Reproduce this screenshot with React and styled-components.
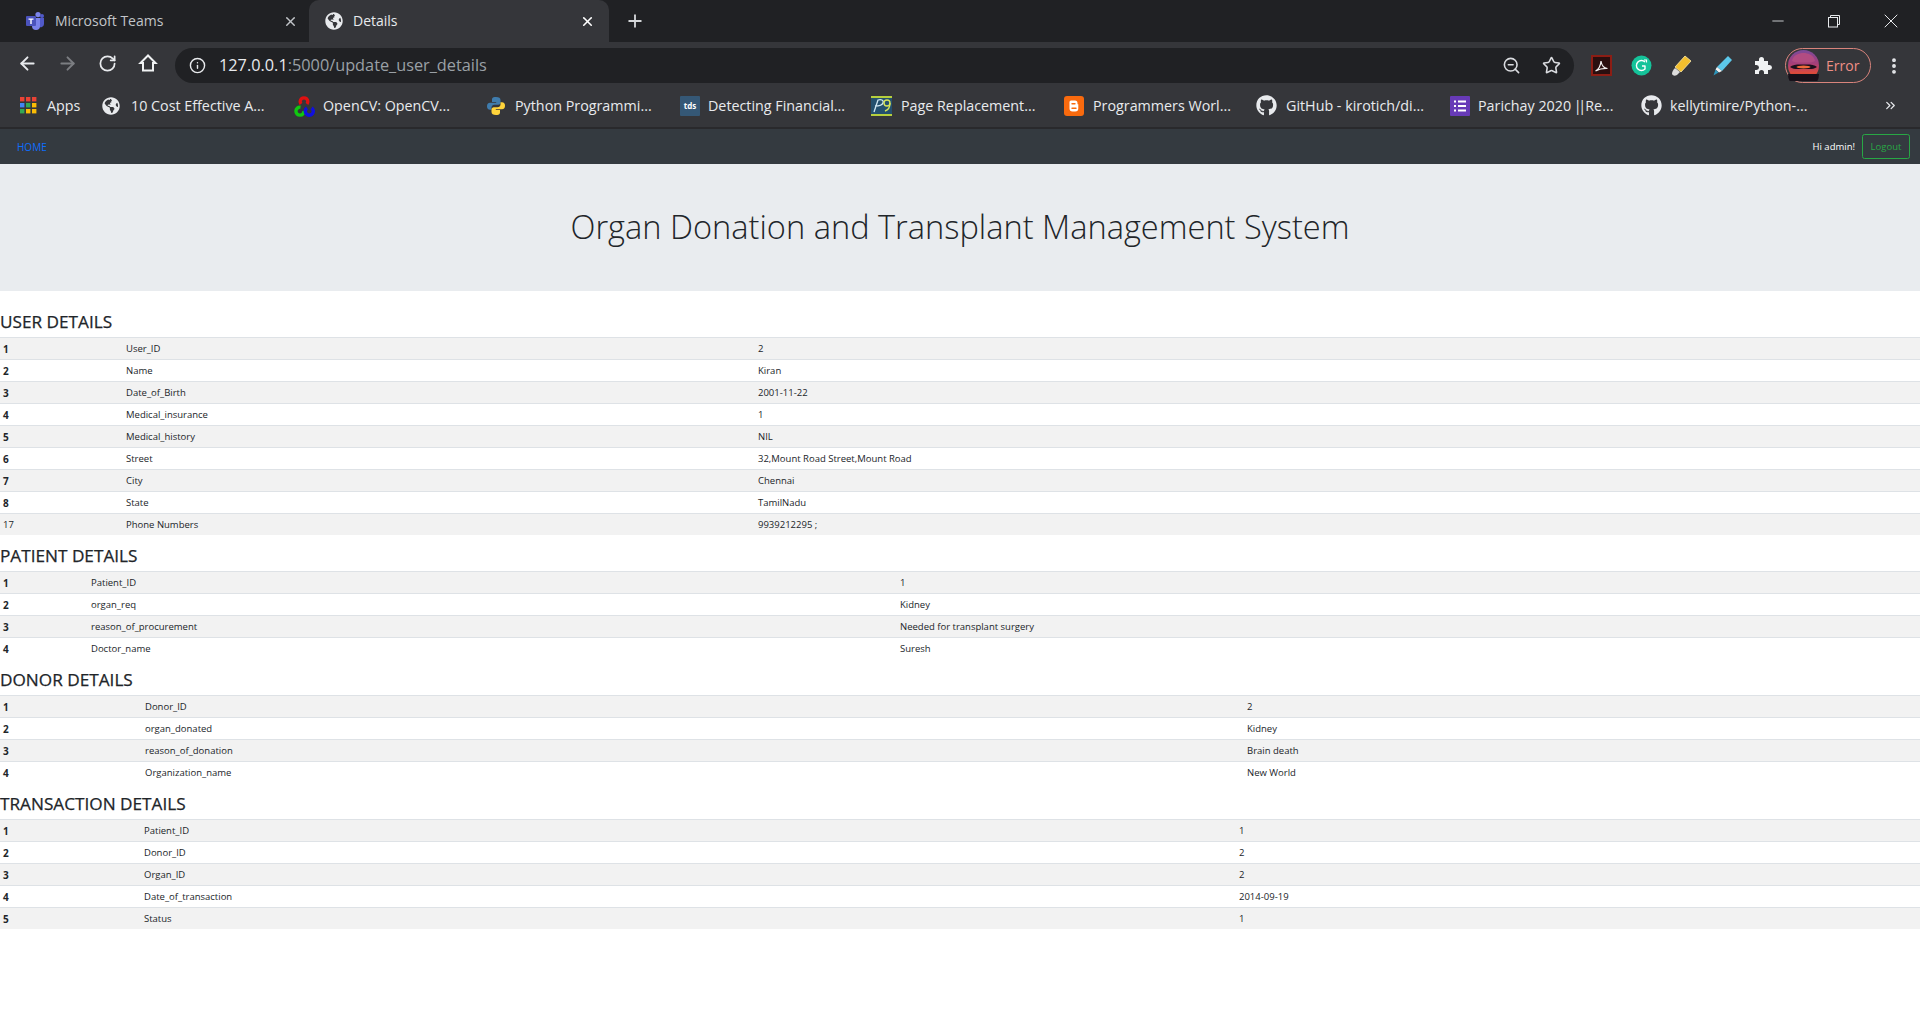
import React from 'react';
import styled, { createGlobalStyle } from 'styled-components';
import { ArrowLeft, ArrowRight, RotateCw, Info, ZoomOut, Star, Plus, X, Minus, MoreVertical, ChevronsRight } from 'lucide-react';
import { FaGithub, FaGlobeAmericas } from 'react-icons/fa';

const Global = createGlobalStyle`
  html, body { margin: 0; padding: 0; background: #fff; }
  body { font-family: "Open Sans", "Noto Sans", sans-serif; overflow: hidden; }
  * { box-sizing: border-box; }
`;
const Page = styled.div`width: 1920px; height: 1029px; display: flex; flex-direction: column; background: #fff;`;
const TabStrip = styled.div`height: 42px; background: #202124; display: flex; align-items: stretch; color: #fff;`;
const Tab = styled.div`
  width: ${p => p.$w}px; padding: 0 ${p => p.$pr}px 0 ${p => p.$pl}px; display: flex; align-items: center; gap: 10px;
  background: ${p => (p.$active ? '#35363a' : 'transparent')};
  color: ${p => (p.$active ? '#e8eaed' : '#c2c5c9')};
  border-radius: 10px 10px 0 0; font-size: 14px;
`;
const TabTitle = styled.span`flex: 1; white-space: nowrap; padding-bottom: 2px;`;
const NewTab = styled.div`width: 52px; display: flex; align-items: center; justify-content: center; color: #d5d7da;`;
const StripSpace = styled.div`flex: 1;`;
const WinButtons = styled.div`display: grid; grid-template-columns: repeat(3, 56.5px); justify-items: center; align-items: center; padding-right: 1px; color: #e8eaed;`;
const Toolbar = styled.div`height: 42px; background: #35363a; display: flex; align-items: center; padding-left: 7px; color: #e8eaed;`;
const NavIcons = styled.div`display: grid; grid-template-columns: repeat(4, 40.4px); justify-items: center; align-items: center; width: 168px;`;
const Omnibox = styled.div`width: 1399px; height: 35px; border-radius: 18px; background: #202124; display: flex; align-items: center; padding: 0 13px 0 14px; gap: 13px; margin-top: 5px;`;
const Url = styled.div`flex: 1; font-size: 16.3px; color: #9aa0a6; white-space: nowrap; padding-bottom: 2px;`;
const UrlHost = styled.span`color: #e8eaed;`;
const OmniIcons = styled.div`display: flex; align-items: center; gap: 21px; color: #dadce0;`;
const ExtIcons = styled.div`display: flex; align-items: center; gap: 19px; margin-left: 17px; margin-top: 5px;`;
const Profile = styled.div`width: 86px; height: 35px; margin-left: 13px; border: 1.5px solid #d9847c; border-radius: 18px; display: flex; align-items: center; gap: 7px; padding-left: 2px; color: #ee8f86; font-size: 14px; margin-top: 5px;`;
const Dots = styled.div`margin-left: 13px; margin-top: 5px; color: #e8eaed; display: flex;`;
const Bookmarks = styled.div`height: 45px; background: #35363a; display: flex; align-items: center; padding-left: 20px; color: #e8eaed; border-bottom: 2px solid #29292c;`;
const Mark = styled.div`width: ${p => p.$w}px; display: flex; align-items: center; font-size: 14.3px; white-space: nowrap;`;
const MarkIcon = styled.span`width: ${p => p.$w || 29}px; flex: none; display: flex; align-items: center;`;
const Tight = styled.span`letter-spacing: -3.5px; margin: 0 2.5px;`;
const Chevron = styled.div`margin-left: 52px; display: flex;`;
const NavBar = styled.nav`height: 35px; background: #343a40; display: flex; align-items: center; padding: 0 10px 0 17px; font-size: 9.5px;`;
const HomeLink = styled.a`color: #0d6efd; flex: 1; font-size: 10px;`;
const Hello = styled.span`color: #fff; margin-right: 7px;`;
const Logout = styled.span`height: 25px; width: 48px; border: 1px solid #28a745; border-radius: 2.5px; color: #28a745; display: flex; align-items: center; justify-content: center;`;
const Jumbotron = styled.header`height: 127px; background: #e9ecef; display: flex; align-items: center; justify-content: center; margin-bottom: 10px; padding-bottom: 2px;`;
const Title = styled.h1`margin: 0; font-size: 32.6px; font-weight: 300; color: #212529;`;
const Heading = styled.h5`margin: 0; height: 36px; padding-top: 10px; font-size: 17.2px; line-height: 22px; font-weight: 500; color: #212529; -webkit-text-stroke: 0.25px #212529;`;
const Table = styled.table`width: 100%; border-collapse: separate; border-spacing: 0; table-layout: fixed; font-size: 9.5px; color: #212529;`;
const Col = styled.col`width: ${p => p.$w}px;`;
const Row = styled.tr`height: 22px; background: ${p => (p.$odd ? '#f2f2f2' : '#fff')};`;
const Cell = styled.td`padding: 0 3px; height: 22px; line-height: 20px; border-top: 1px solid #dee2e6; font-weight: ${p => (p.$bold ? 700 : 400)}; font-size: ${p => (p.$bold ? '10px' : '9.5px')}; white-space: nowrap;`;

const sections = [
  { title: 'USER DETAILS', cols: [123, 632], rows: [['1','User_ID','2'],['2','Name','Kiran'],['3','Date_of_Birth','2001-11-22'],['4','Medical_insurance','1'],['5','Medical_history','NIL'],['6','Street','32,Mount Road Street,Mount Road'],['7','City','Chennai'],['8','State','TamilNadu'],['17','Phone Numbers','9939212295 ;']], plainLast: true },
  { title: 'PATIENT DETAILS', cols: [88, 809], rows: [['1','Patient_ID','1'],['2','organ_req','Kidney'],['3','reason_of_procurement','Needed for transplant surgery'],['4','Doctor_name','Suresh']] },
  { title: 'DONOR DETAILS', cols: [142, 1102], rows: [['1','Donor_ID','2'],['2','organ_donated','Kidney'],['3','reason_of_donation','Brain death'],['4','Organization_name','New World']] },
  { title: 'TRANSACTION DETAILS', cols: [141, 1095], rows: [['1','Patient_ID','1'],['2','Donor_ID','2'],['3','Organ_ID','2'],['4','Date_of_transaction','2014-09-19'],['5','Status','1']] },
];

const TeamsLogo = () => (
  <svg width="20" height="20" viewBox="0 0 20 20"><circle cx="13" cy="3.6" r="2.6" fill="#7b83eb"/><circle cx="17" cy="5" r="2" fill="#5059c9"/><path d="M11 7h8v6a3.5 3.5 0 0 1-5 3z" fill="#5059c9"/><path d="M7 7h8v8a4 4 0 0 1-8 0z" fill="#7b83eb"/><rect x="1" y="5" width="10" height="10" rx="1" fill="#4b53bc"/><path d="M3.5 7.5h5v1.2H6.7v4.3H5.3V8.7H3.5z" fill="#fff"/></svg>
);
const HomeIcon = () => (
  <svg width="20" height="20" viewBox="0 0 20 20" fill="none" stroke="#f1f3f4" strokeWidth="2" strokeLinejoin="miter"><path d="M10 2.500L2.500 10H5v7.500h10V10h2.500z"/></svg>
);
const AppsGrid = () => (
  <svg width="17" height="17" viewBox="0 0 17 17">
    {['#ea4335','#ea4335','#ea4335','#4285f4','#34a853','#fbbc05','#34a853','#fbbc05','#fbbc05'].map((c, i) => <rect key={i} x={(i % 3) * 6} y={Math.floor(i / 3) * 6} width="4.4" height="4.4" fill={c} />)}
  </svg>
);
const OpenCvLogo = () => (
  <svg width="22" height="22" viewBox="0 0 22 22" fill="none" strokeWidth="3.4"><path d="M8 9a3.800 3.800 0 1 1 6 0" stroke="#e01010"/><path d="M7.500 12.200a4 4 0 1 0 3.400 3.500" stroke="#10c810"/><path d="M14 13a4 4 0 1 0 4.600 0" stroke="#1010e0"/></svg>
);
const PythonLogo = () => (
  <svg width="20" height="20" viewBox="0 0 20 20"><path d="M10 1C6 1 6 2.500 6 4v2h4.200v.8H4C2 6.800 1 8 1 10.200s1 3.600 3 3.600h1.500v-2.200c0-1.600 1.300-2.800 3-2.800h3.700c1.300 0 2.300-1 2.300-2.300V4C14.500 2.300 13 1 10 1z" fill="#3f7cad"/><path d="M10 19c4 0 4-1.500 4-3v-2H9.800v-.8H16c2 0 3-1.200 3-3.400s-1-3.600-3-3.600h-1.500v2.200c0 1.600-1.300 2.800-3 2.800H7.800c-1.300 0-2.300 1-2.300 2.300V16c0 1.700 1.500 3 4.500 3z" fill="#ffd43b"/></svg>
);
const TdsLogo = () => (
  <svg width="20" height="20" viewBox="0 0 20 20"><rect width="20" height="20" rx="1" fill="#355876"/><text x="10" y="13" fontSize="8" fontWeight="700" fontFamily="Open Sans, sans-serif" textAnchor="middle" fill="#fff">tds</text></svg>
);
const P9Logo = () => (
  <svg width="21" height="22" viewBox="0 0 21 22" fill="none"><rect y="2" width="21" height="18" fill="#24506e"/><path d="M0 2h21M0 20h21" stroke="#b6cf3d" strokeWidth="1.800"/><path d="M3 17L7 5c3-1 6 0 5 3s-5 3-8 3" stroke="#cfe6f2" strokeWidth="1.300"/><circle cx="16" cy="8" r="3" stroke="#d6e35a" strokeWidth="1.400"/><path d="M19 8c0 4-2 7-5 8" stroke="#d6e35a" strokeWidth="1.400"/></svg>
);
const BloggerLogo = () => (
  <svg width="20" height="20" viewBox="0 0 20 20"><rect width="20" height="20" rx="3" fill="#f96a0e"/><path d="M7 4.500h4a2.500 2.500 0 0 1 2.500 2.500v1.200h.8v4.300a3 3 0 0 1-3 3H8.500a3 3 0 0 1-3-3V6A1.500 1.500 0 0 1 7 4.500z" fill="#fff"/><path d="M8 7.800h3M8 12.200h4" stroke="#f96a0e" strokeWidth="1.400" strokeLinecap="round"/></svg>
);
const FormsLogo = () => (
  <svg width="20" height="20" viewBox="0 0 20 20"><rect width="20" height="20" rx="1" fill="#673ab7"/><path d="M8 5.500h8M8 10h8M8 14.500h8M4 5.500h2M4 10h2M4 14.500h2" stroke="#fff" strokeWidth="1.800"/></svg>
);
const AcrobatLogo = () => (
  <svg width="21" height="21" viewBox="0 0 21 21"><rect x="1" y="1" width="19" height="19" fill="#2a0f0f" stroke="#8c1d14" strokeWidth="2"/><path d="M4.500 16c3-1.500 5-5 5.500-10 .5 4 3 7 6.500 7.500-3.500-.2-8 .5-12 2.500z" fill="none" stroke="#f2f2f2" strokeWidth="1.200"/></svg>
);
const GrammarlyLogo = () => (
  <svg width="21" height="21" viewBox="0 0 21 21"><circle cx="10.500" cy="10.500" r="10" fill="#15c39a"/><path d="M14 7a5 5 0 1 0 0 7v-3h-3" fill="none" stroke="#fff" strokeWidth="1.400" strokeLinejoin="round"/><path d="M13 5h2.500v2.500" fill="none" stroke="#fff" strokeWidth="1.200"/></svg>
);
const EraserLogo = () => (
  <svg width="21" height="22" viewBox="0 0 21 22"><path d="M14 1l6 5-10 11-6-5z" fill="#f3bf2e" stroke="#fbe9a8" strokeWidth="0.800"/><path d="M4 13l5 4-3 3c-2 1-4 1-5-1 0-2 1-4 3-6z" fill="#dcdcdc"/></svg>
);
const MarkerLogo = () => (
  <svg width="22" height="22" viewBox="0 0 22 22"><path d="M17 1l4 4-10 11-5-4z" fill="#5cc8ea"/><path d="M6 12l5 4-3 1.500-3.500-3z" fill="#f1f3f4"/><path d="M4.500 14.500l3 3-5 3z" fill="#2d95ba"/></svg>
);
const PuzzleIcon = () => (
  <svg width="20" height="20" viewBox="0 0 20 20"><path d="M3 5h4V3.500a2.500 2.500 0 0 1 5 0V5h4v4h1.500a2.500 2.500 0 0 1 0 5H16v4h-4v-1.500a2.500 2.500 0 0 0-5 0V18H3v-4H1.500V14h3a2.500 2.500 0 0 0 0-5H3z" fill="#f1f3f4"/></svg>
);
const Avatar = () => (
  <svg width="31" height="31" viewBox="0 0 31 31"><defs><linearGradient id="sky" x1="0" y1="0" x2="0" y2="1"><stop offset="0" stopColor="#7a4a9a"/><stop offset="0.45" stopColor="#a83f78"/><stop offset="0.75" stopColor="#e04a3a"/><stop offset="1" stopColor="#1b0f1c"/></linearGradient></defs><circle cx="15.500" cy="15.500" r="15.500" fill="url(#sky)"/><path d="M4 11c1-6 7-8 11.500-8S26 5 27 11c-3 2-8 1.500-11.500 1.500S7 13 4 11z" fill="#b24c82"/><path d="M2 17c3-3 9-2.500 13.500-2.500S26 14 29 17c-3 2.500-8 2-10 2h-7c-2 0-7 .5-10-2z" fill="#1b0f1c"/><ellipse cx="15.500" cy="17" rx="7" ry="1.400" fill="#ef6a3a"/><path d="M0 24h31a15.500 15.500 0 0 1-31 0z" fill="#171019"/></svg>
);

const marks = [
  [<>Apps</>, 82, <AppsGrid />, 27],
  [<>10 Cost Effective A...</>, 191, <FaGlobeAmericas size={18} />],
  [<>OpenCV: OpenCV...</>, 193, <OpenCvLogo />, 30],
  [<>Python Programmi...</>, 194, <PythonLogo />],
  [<>Detecting Financial...</>, 191, <TdsLogo />, 28],
  [<>Page Replacement...</>, 193, <P9Logo />, 30],
  [<>Programmers Worl...</>, 192, <BloggerLogo />],
  [<>GitHub - kirotich/di...</>, 194, <FaGithub size={21} />, 30],
  [<>Parichay 2020<Tight> || </Tight>Re...</>, 191, <FormsLogo />, 28],
  [<>kellytimire/Python-...</>, 190, <FaGithub size={21} />],
];

export default function App() {
  return (
    <Page>
      <Global />
      <TabStrip>
        <Tab $w={309} $pl={25} $pr={11}>
          <TeamsLogo /><TabTitle>Microsoft Teams</TabTitle><X size={15} strokeWidth={2.2} />
        </Tab>
        <Tab $active $w={300} $pl={16} $pr={14}>
          <FaGlobeAmericas size={18} /><TabTitle>Details</TabTitle><X size={15} strokeWidth={2.6} color="#fff" />
        </Tab>
        <NewTab><Plus size={20} strokeWidth={2.2} /></NewTab>
        <StripSpace />
        <WinButtons>
          <Minus size={18} strokeWidth={1.1} />
          <svg width="14" height="14" viewBox="0 0 14 14" fill="none" stroke="currentColor"><rect x="1.500" y="3.500" width="9" height="9.500"/><path d="M3.500 3.500v-2h9v9h-2"/></svg>
          <X size={24} strokeWidth={1} />
        </WinButtons>
      </TabStrip>
      <Toolbar>
        <NavIcons>
          <ArrowLeft size={21} strokeWidth={2.2} />
          <ArrowRight size={21} strokeWidth={2.2} color="#7c7e82" />
          <RotateCw size={19} strokeWidth={2.2} />
          <HomeIcon />
        </NavIcons>
        <Omnibox>
          <Info size={17} strokeWidth={2} />
          <Url><UrlHost>127.0.0.1</UrlHost>:5000/update_user_details</Url>
          <OmniIcons><ZoomOut size={19} /><Star size={19} /></OmniIcons>
        </Omnibox>
        <ExtIcons>
          <AcrobatLogo /><GrammarlyLogo /><EraserLogo /><MarkerLogo /><PuzzleIcon />
        </ExtIcons>
        <Profile><Avatar />Error</Profile>
        <Dots><MoreVertical size={20} strokeWidth={2.6} /></Dots>
      </Toolbar>
      <Bookmarks>
        {marks.map(([label, w, icon, slot], i) => <Mark key={i} $w={w}><MarkIcon $w={slot}>{icon}</MarkIcon><span>{label}</span></Mark>)}
        <Chevron><ChevronsRight size={15} strokeWidth={2} /></Chevron>
      </Bookmarks>
      <NavBar>
        <HomeLink>HOME</HomeLink>
        <Hello>Hi admin!</Hello>
        <Logout>Logout</Logout>
      </NavBar>
      <Jumbotron><Title>Organ Donation and Transplant Management System</Title></Jumbotron>
      {sections.map(s => (
        <section key={s.title}>
          <Heading>{s.title}</Heading>
          <Table>
            <colgroup><Col $w={s.cols[0]} /><Col $w={s.cols[1]} /><col /></colgroup>
            <tbody>
              {s.rows.map((r, i) => (
                <Row key={r[0]} $odd={i % 2 === 0}>
                  <Cell $bold={!(s.plainLast && i === s.rows.length - 1)}>{r[0]}</Cell>
                  <Cell>{r[1]}</Cell>
                  <Cell>{r[2]}</Cell>
                </Row>
              ))}
            </tbody>
          </Table>
        </section>
      ))}
    </Page>
  );
}
